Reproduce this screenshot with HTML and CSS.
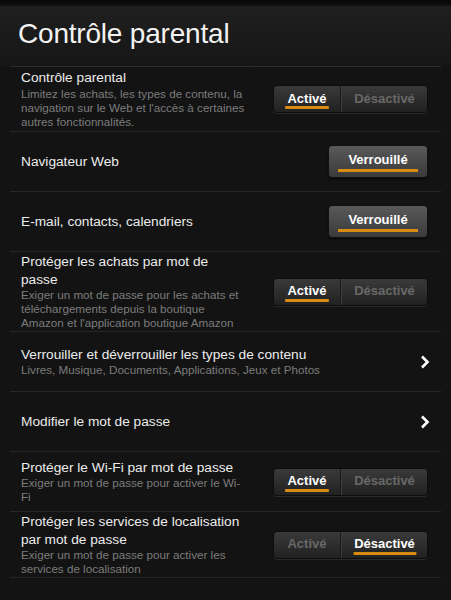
FILE: index.html
```html
<!DOCTYPE html>
<html lang="fr">
<head>
    <meta charset="UTF-8">
    <meta name="viewport" content="width=device-width, initial-scale=1.0">
    <title>Contrôle parental</title>
    <link rel="stylesheet" href="styles.css">
</head>
<body>
    <div class="topbar"></div>
    <header class="header">
        <h1>Contrôle parental</h1>
    </header>

    <ul class="settings">
        <li class="row row-first">
            <div class="text">
                <div class="title">Contrôle parental</div>
                <div class="sub">Limitez les achats, les types de contenu, la navigation sur le Web et l'accès à certaines autres fonctionnalités.</div>
            </div>
            <div class="toggle">
                <span class="seg seg-on on">Activé</span>
                <span class="seg seg-off">Désactivé</span>
            </div>
        </li>
        <li class="row">
            <div class="text">
                <div class="title">Navigateur Web</div>
            </div>
            <div class="lock"><span>Verrouillé</span></div>
        </li>
        <li class="row">
            <div class="text">
                <div class="title">E-mail, contacts, calendriers</div>
            </div>
            <div class="lock"><span>Verrouillé</span></div>
        </li>
        <li class="row">
            <div class="text">
                <div class="title">Protéger les achats par mot de passe</div>
                <div class="sub">Exiger un mot de passe pour les achats et téléchargements depuis la boutique Amazon et l'application boutique Amazon</div>
            </div>
            <div class="toggle">
                <span class="seg seg-on on">Activé</span>
                <span class="seg seg-off">Désactivé</span>
            </div>
        </li>
        <li class="row">
            <div class="text text-wide">
                <div class="title">Verrouiller et déverrouiller les types de contenu</div>
                <div class="sub">Livres, Musique, Documents, Applications, Jeux et Photos</div>
            </div>
            <svg class="chevron" width="10" height="14" viewBox="0 0 10 14">
                <polyline points="2,1.5 7.5,7 2,12.5" fill="none" stroke="#fff" stroke-width="2.6"/>
            </svg>
        </li>
        <li class="row">
            <div class="text text-wide">
                <div class="title">Modifier le mot de passe</div>
            </div>
            <svg class="chevron" width="10" height="14" viewBox="0 0 10 14">
                <polyline points="2,1.5 7.5,7 2,12.5" fill="none" stroke="#fff" stroke-width="2.6"/>
            </svg>
        </li>
        <li class="row">
            <div class="text">
                <div class="title">Protéger le Wi-Fi par mot de passe</div>
                <div class="sub">Exiger un mot de passe pour activer le Wi-Fi</div>
            </div>
            <div class="toggle">
                <span class="seg seg-on on">Activé</span>
                <span class="seg seg-off">Désactivé</span>
            </div>
        </li>
        <li class="row">
            <div class="text">
                <div class="title">Protéger les services de localisation par mot de passe</div>
                <div class="sub">Exiger un mot de passe pour activer les services de localisation</div>
            </div>
            <div class="toggle">
                <span class="seg seg-on">Activé</span>
                <span class="seg seg-off on">Désactivé</span>
            </div>
        </li>
    </ul>
</body>
</html>
```
FILE: styles.css
```css
body {
    margin: 0;
    background: #131313;
    color: #fff;
    font-family: "Liberation Sans", Arial, sans-serif;
    width: 451px;
    height: 600px;
    overflow: hidden;
}
.topbar {
    height: 6px;
    background: linear-gradient(#080808, #111);
}
.header {
    height: 60px;
    background: linear-gradient(#1f1f1f, #161616);
}
.header h1 {
    margin: 0;
    padding: 12px 0 0 18px;
    font-size: 28px;
    font-weight: normal;
    letter-spacing: -0.2px;
    color: #f2f2f2;
}
.settings {
    list-style: none;
    margin: 0 10px;
    padding: 0;
    border-top: 1px solid #2c2c2c;
}
.row {
    display: flex;
    align-items: center;
    justify-content: space-between;
    min-height: 60px;
    padding: 1px 13px 1px 11px;
    box-sizing: border-box;
    border-bottom: 1px solid #262626;
}
.row-first {
    min-height: 65px;
}
.text {
    width: 226px;
}
.text-wide {
    width: auto;
}
.title {
    font-size: 13.7px;
    line-height: 17.5px;
    color: #ececec;
}
.sub {
    font-size: 11.65px;
    line-height: 14px;
    color: #7c7c7c;
}
.toggle {
    display: flex;
    width: 155px;
    height: 28px;
    border-radius: 4px;
    background: linear-gradient(#3a3a3a, #212121);
    border: 1px solid #0d0d0d;
    box-shadow: 0 1px 0 #2a2a2a;
    box-sizing: border-box;
}
.seg {
    display: flex;
    align-items: center;
    justify-content: center;
    padding-bottom: 2px;
    font-size: 13px;
    font-weight: bold;
    color: #686868;
}
.seg-on {
    width: 66px;
    border-right: 1px solid #1a1a1a;
}
.seg-off {
    flex: 1;
    border-left: 1px solid #3c3c3c;
}
.seg.on {
    color: #fff;
    position: relative;
}
.seg.on::after {
    content: "";
    position: absolute;
    left: 50%;
    bottom: 3px;
    transform: translateX(-50%);
    width: calc(100% - 22px);
    height: 3px;
    border-radius: 1px;
    background: #d98b10;
}
.lock {
    width: 100px;
    height: 33px;
    border-radius: 4px;
    background: linear-gradient(#595959, #3a3a3a);
    border: 1px solid #111;
    box-sizing: border-box;
    box-shadow: 0 1px 2px rgba(0, 0, 0, 0.6);
    position: relative;
    display: flex;
    justify-content: center;
    padding-top: 6px;
    font-size: 13px;
    font-weight: bold;
    color: #fff;
}
.lock::after {
    content: "";
    position: absolute;
    left: 9px;
    right: 9px;
    bottom: 5px;
    height: 3px;
    background: #d98b10;
}
.chevron {
    margin-right: -2px;
}
```
